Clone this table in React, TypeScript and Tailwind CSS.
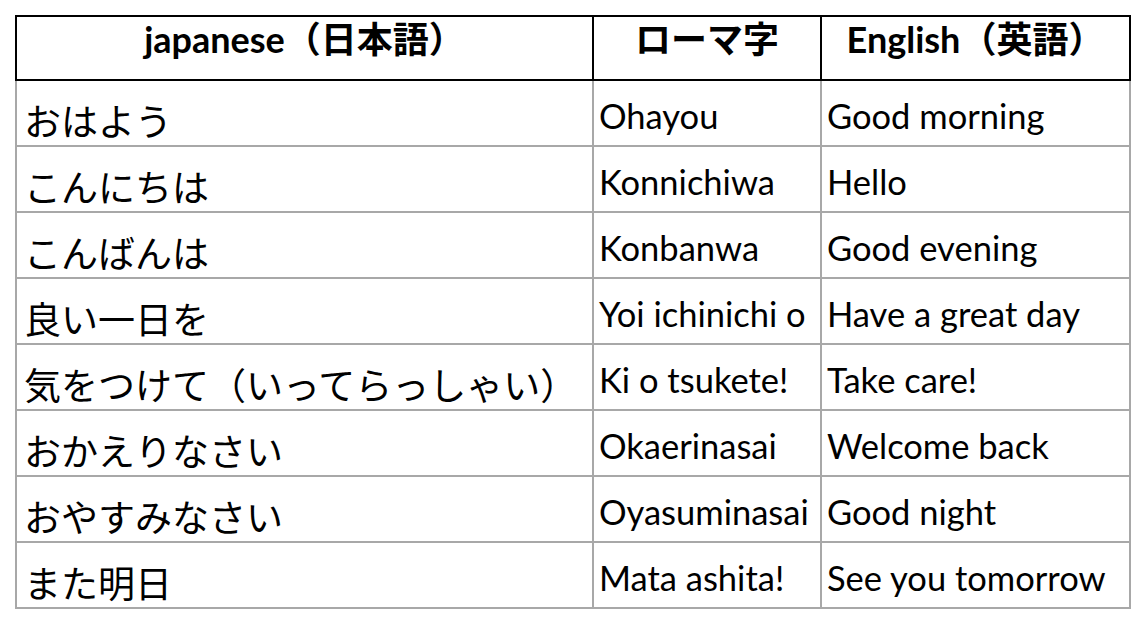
import React from "react";

const rows: [string, string, string][] = [
  ["おはよう", "Ohayou", "Good morning"],
  ["こんにちは", "Konnichiwa", "Hello"],
  ["こんばんは", "Konbanwa", "Good evening"],
  ["良い一日を", "Yoi ichinichi o", "Have a great day"],
  ["気をつけて（いってらっしゃい）", "Ki o tsukete!", "Take care!"],
  ["おかえりなさい", "Okaerinasai", "Welcome back"],
  ["おやすみなさい", "Oyasuminasai", "Good night"],
  ["また明日", "Mata ashita!", "See you tomorrow"],
];

const font = "font-['Lato','Noto_Sans_CJK_JP',sans-serif]";

export default function App() {
  return (
    <div className={`min-h-screen bg-white text-black ${font}`}>
      <div className="ml-[15px] pt-[15px] w-[1116px]">
        <div className="grid grid-cols-[575px_228px_309px] border-2 border-black h-[66px] font-bold text-[36px] leading-[44px]">
          <div className="text-center">japanese（日本語）</div>
          <div className="text-center border-l-2 border-black">ローマ字</div>
          <div className="text-center border-l-2 border-black">English（英語）</div>
        </div>
        <div className="border-x-2 border-[#a8a8a8]">
          {rows.map((r, i) => (
            <div
              key={i}
              className="grid grid-cols-[575px_228px_309px] h-[66px] border-b-2 border-[#a8a8a8]"
            >
              <div className="flex items-end pl-[7px] pb-[1px] text-[37px] leading-[44px] whitespace-nowrap">
                {r[0]}
              </div>
              <div className="flex items-end pl-[5px] pb-[7px] text-[34.5px] leading-[44px] border-l-2 border-[#a8a8a8] whitespace-nowrap">
                {r[1]}
              </div>
              <div className="flex items-end pl-[5px] pb-[7px] text-[34.5px] leading-[44px] border-l-2 border-[#a8a8a8] whitespace-nowrap">
                {r[2]}
              </div>
            </div>
          ))}
        </div>
      </div>
    </div>
  );
}
